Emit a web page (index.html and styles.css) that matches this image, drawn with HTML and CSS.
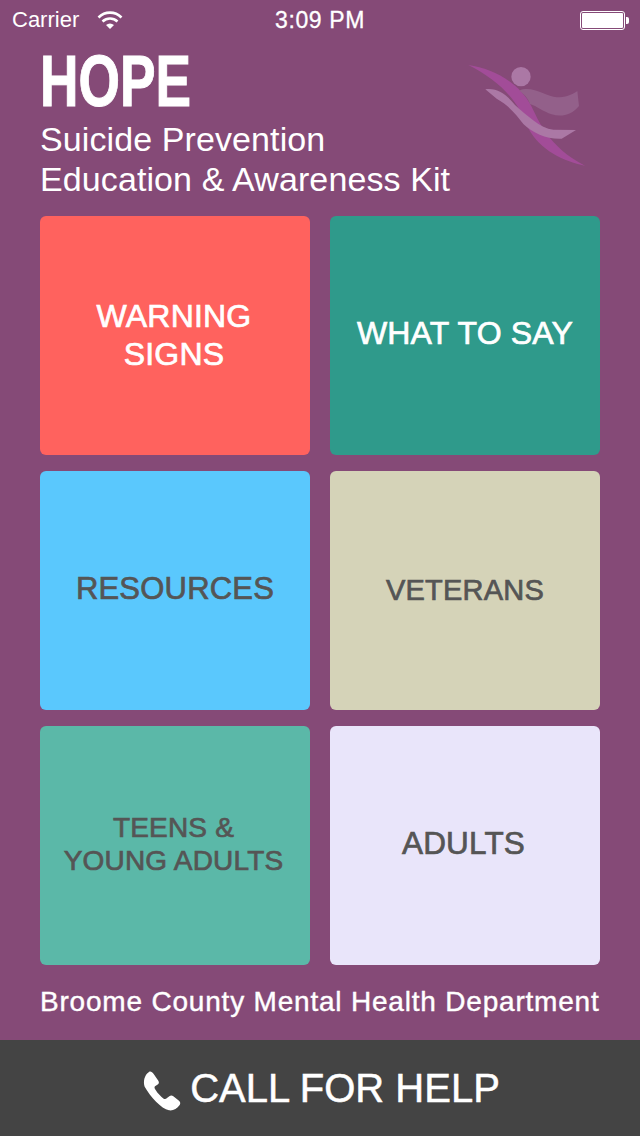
FILE: index.html
```html
<!DOCTYPE html>
<html lang="en">
<head>
<meta charset="utf-8">
<title>HOPE</title>
<link rel="stylesheet" href="styles.css">
</head>
<body>
<div class="app">
  <div class="status">
    <div class="status-left">
      <span class="carrier">Carrier</span>
      <svg class="wifi" viewBox="0 0 26 20" width="26" height="20"><path d="M1.500 7.500C8 1 18 1 24.500 7.500" fill="none" stroke="#fff" stroke-width="2.6"/><path d="M5.500 11.500C10 7.500 16 7.500 20.500 11.500" fill="none" stroke="#fff" stroke-width="2.600"/><path d="M9 15C11.500 13 14.500 13 17 15L13 19Z" fill="#fff"/></svg>
    </div>
    <span class="time">3:09 PM</span>
    <div class="battery"><div class="battery-body"><div class="battery-fill"></div></div><div class="battery-tip"></div></div>
  </div>
  <main class="content">
    <header class="header">
      <h1 class="title">HOPE</h1>
      <p class="subtitle">Suicide Prevention<br>Education &amp; Awareness Kit</p>
      <svg class="logo" viewBox="75 180 375 330" width="125" height="110">
        <path d="M85 195C160 205 240 250 275 320C295 360 325 440 435 497C370 485 300 450 265 385C235 300 175 240 85 195Z" fill="#a24c98"/>
        <circle cx="243" cy="230" r="29" fill="#ab78a5"/>
        <path d="M238 272C275 255 320 290 350 292C375 292 395 285 412 273L417 318C395 345 365 352 335 343C310 335 290 318 270 312C265 295 250 280 238 272Z" fill="#93608a"/>
        <path d="M136 268C175 262 205 290 225 315C260 345 300 385 340 389L408 390L365 416C320 418 280 400 250 372C230 345 205 315 170 296Z" fill="#ab78a5"/>
      </svg>
    </header>
    <div class="grid">
      <a class="tile red light warning">WARNING<br>SIGNS</a>
      <a class="tile teal light say">WHAT TO SAY</a>
      <a class="tile blue dark resources">RESOURCES</a>
      <a class="tile khaki dark veterans">VETERANS</a>
      <a class="tile green dark teens">TEENS &amp;<br>YOUNG ADULTS</a>
      <a class="tile lilac dark adults">ADULTS</a>
    </div>
    <p class="dept">Broome County Mental Health Department</p>
  </main>
  <footer class="call">
    <svg class="phone" viewBox="70 63 114 120" width="38" height="40"><path d="M88 66C92 63 98 66 102 72L116 92C119 97 118 101 113 104L106 109C103 112 105 116 108 120C114 130 122 138 132 146C136 148 139 147 142 144L149 139C153 136 157 136 161 139L178 152C182 156 183 160 180 165C172 176 160 183 148 181C125 176 92 140 75 110C70 95 74 75 88 66Z" fill="#fff"/></svg>
    <span class="call-text">CALL FOR HELP</span>
  </footer>
</div>
</body>
</html>
```
FILE: styles.css
```css
* { box-sizing: border-box; }
html, body { margin: 0; padding: 0; }
body { width: 640px; height: 1136px; overflow: hidden; font-family: "Liberation Sans", Arial, sans-serif; }
.app { width: 640px; height: 1136px; background: #854a77; display: flex; flex-direction: column; color: #fff; }
.status { height: 40px; flex: none; display: flex; align-items: center; justify-content: space-between; padding: 0 12px; position: relative; }
.status-left { display: flex; align-items: center; gap: 18px; }
.carrier { font-size: 22px; }
.wifi { display: block; margin-top: -1px; }
.time { font-size: 23px; letter-spacing: 0.6px; -webkit-text-stroke: 0.3px #fff; position: absolute; left: 0; right: 0; text-align: center; }
.battery { display: flex; align-items: center; margin-left: auto; margin-right: -1px; }
.battery-body { width: 45px; height: 19px; border: 1px solid #fff; border-radius: 3px; padding: 1px; }
.battery-fill { width: 100%; height: 100%; background: #fff; border-radius: 1px; }
.battery-tip { width: 3px; height: 7px; background: #fff; border-radius: 0 2px 2px 0; margin-left: 1px; }
.content { flex: 1; padding: 0 40px; display: flex; flex-direction: column; }
.header { height: 176px; position: relative; }
.title { margin: 0; padding-top: 4px; font-weight: 700; font-size: 72px; line-height: 75px; -webkit-text-stroke: 1px #fff; transform: scaleX(0.74); transform-origin: left center; }
.subtitle { margin: 0; font-size: 34px; line-height: 40px; letter-spacing: 0.1px; }
.logo { position: absolute; left: 425px; top: 20px; display: block; }
.grid { display: grid; grid-template-columns: 270px 270px; grid-template-rows: 239px 239px 239px; column-gap: 20px; row-gap: 16px; }
.tile { border-radius: 6px; display: flex; align-items: center; justify-content: center; text-align: center; -webkit-text-stroke: 0.7px currentColor; letter-spacing: 0.2px; padding-bottom: 5px; }
.light { color: #fff; }
.dark { color: #555; }
.warning { font-size: 32px; line-height: 38px; padding-bottom: 1px; padding-right: 2px; }
.say { font-size: 32px; line-height: 38px; }
.resources { font-size: 31px; line-height: 38px; padding-bottom: 4px; }
.veterans { font-size: 29px; line-height: 36px; padding-bottom: 1px; }
.teens { font-size: 28px; line-height: 33px; padding-bottom: 3px; padding-right: 3px; }
.adults { font-size: 31.500px; line-height: 36px; padding-right: 3px; }
.red { background: #ff625e; }
.teal { background: #2f9a8b; }
.blue { background: #5ac8fd; }
.khaki { background: #d5d3b8; }
.green { background: #5bb8a8; }
.lilac { background: #e9e5fa; }
.dept { margin: 20px 0 0; font-size: 28px; line-height: 34px; white-space: nowrap; letter-spacing: 0.8px; -webkit-text-stroke: 0.4px #fff; }
.call { height: 96px; flex: none; background: #444; display: flex; align-items: center; justify-content: center; gap: 9px; padding-left: 3px; }
.phone { display: block; margin-top: 5px; }
.call-text { font-size: 40px; -webkit-text-stroke: 0.5px #fff; }
```
